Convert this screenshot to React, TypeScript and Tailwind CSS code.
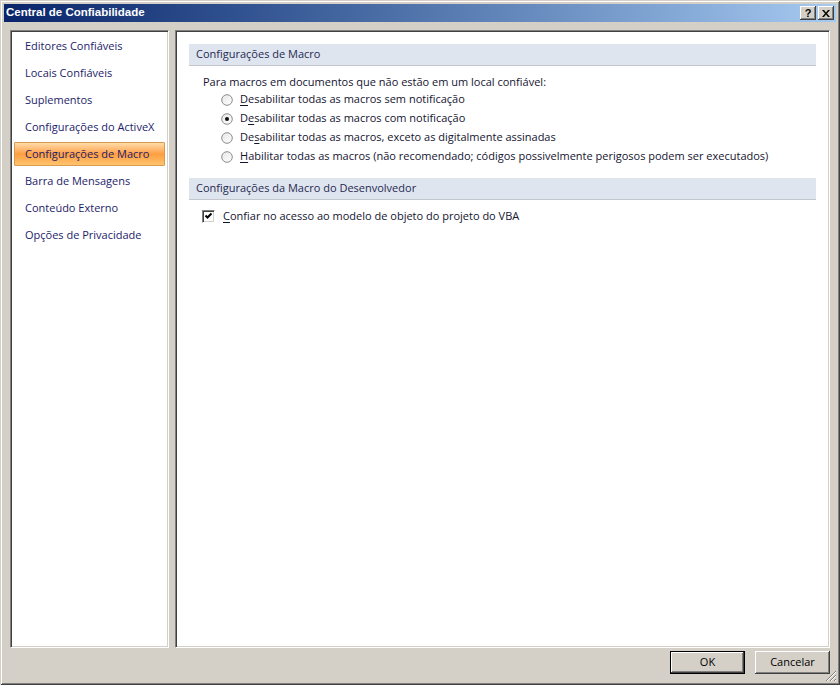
import React from "react";

const navItems = [
  "Editores Confiáveis",
  "Locais Confiáveis",
  "Suplementos",
  "Configurações do ActiveX",
  "Configurações de Macro",
  "Barra de Mensagens",
  "Conteúdo Externo",
  "Opções de Privacidade",
];

function Radio({ checked }: { checked?: boolean }) {
  return (
    <svg width="12" height="12" viewBox="0 0 12 12" className="shrink-0">
      <defs>
        <linearGradient id="rg" x1="0" y1="0" x2="1" y2="1">
          <stop offset="0" stopColor="#e6e6e6" />
          <stop offset="1" stopColor="#ffffff" />
        </linearGradient>
      </defs>
      <circle cx="6" cy="6" r="5.3" fill="url(#rg)" stroke="#8c8c8c" strokeWidth="1" />
      {checked && <circle cx="6" cy="6" r="2" fill="#111" />}
    </svg>
  );
}

function RadioRow({
  checked,
  before,
  u,
  after,
}: {
  checked?: boolean;
  before: string;
  u: string;
  after: string;
}) {
  return (
    <div className="flex h-[19px] items-center pl-[32px]">
      <Radio checked={checked} />
      <span className="ml-[7px] whitespace-nowrap">
        {before}
        <span className="underline underline-offset-2">{u}</span>
        {after}
      </span>
    </div>
  );
}

function SectionHeader({ children }: { children: React.ReactNode }) {
  return (
    <div className="flex h-[22px] items-center border-b border-[#c3c7cc] bg-[#dfe5ee] pl-[7px] text-[#1f2a52]">
      {children}
    </div>
  );
}

export default function App() {
  const raised =
    "shadow-[inset_-1px_-1px_0_#404040,inset_1px_1px_0_#ffffff,inset_-2px_-2px_0_#808080]";
  const sunken =
    "border border-t-[#808080] border-l-[#808080] border-b-white border-r-white shadow-[inset_1px_1px_0_#404040,inset_-1px_-1px_0_#d4d0c8]";
  return (
    <div
      className="relative flex h-[685px] w-[840px] flex-col overflow-hidden bg-[#d4d0c8] p-[4px] text-[11px] shadow-[inset_1px_1px_0_#d4d0c8,inset_-1px_-1px_0_#404040,inset_2px_2px_0_#ffffff,inset_-2px_-2px_0_#808080]"
      style={{ fontFamily: '"Open Sans", "Noto Sans", sans-serif' }}
    >
      {/* title bar */}
      <div className="flex h-[18px] shrink-0 items-center justify-between bg-gradient-to-r from-[#0a246a] to-[#a6caf0] pl-[2px] pr-[2px]">
        <span
          className="text-[11.5px] font-bold text-white"
          style={{ fontFamily: '"Liberation Sans", Arial, sans-serif' }}
        >
          Central de Confiabilidade
        </span>
        <div className="flex gap-[2px]">
          <div
            className={`flex h-[14px] w-[16px] items-center justify-center bg-[#d4d0c8] ${raised}`}
          >
            <span
              className="text-[11px] font-bold leading-none text-black"
              style={{ fontFamily: '"Liberation Sans", Arial, sans-serif' }}
            >
              ?
            </span>
          </div>
          <div
            className={`flex h-[14px] w-[16px] items-center justify-center bg-[#d4d0c8] ${raised}`}
          >
            <svg width="8" height="7" viewBox="0 0 8 7">
              <path d="M0 0h2l2 2.5L6 0h2L5 3.5 8 7H6L4 4.5 2 7H0l3-3.5z" fill="#000" />
            </svg>
          </div>
        </div>
      </div>

      {/* content */}
      <div className="flex min-h-0 flex-1 gap-[6px] px-[6px] pt-[8px]">
        {/* left nav */}
        <div className={`w-[159px] shrink-0 bg-white p-[2px] pt-[3px] ${sunken}`}>
          <div className="flex flex-col gap-[3px] px-[1px]">
            {navItems.map((item, i) =>
              i === 4 ? (
                <div
                  key={item}
                  className="flex h-[24px] items-center rounded-[1px] border border-[#d99a50] bg-gradient-to-b from-[#ffdca8] via-[#ff9e40] to-[#ffc46e] pl-[10px] text-[#1c1c6a]"
                >
                  {item}
                </div>
              ) : (
                <div
                  key={item}
                  className="flex h-[24px] items-center border border-transparent pl-[10px] text-[#1c1c6a]"
                >
                  {item}
                </div>
              )
            )}
          </div>
        </div>

        {/* right panel */}
        <div className={`min-w-0 flex-1 bg-white px-[13px] pt-[13px] text-[#141430] ${sunken}`}>
          <SectionHeader>Configurações de Macro</SectionHeader>
          <div className="mt-[8px] flex h-[16px] items-center pl-[14px]">
            Para macros em documentos que não estão em um local confiável:
          </div>
          <RadioRow before="" u="D" after="esabilitar todas as macros sem notificação" />
          <RadioRow checked before="D" u="e" after="sabilitar todas as macros com notificação" />
          <RadioRow before="De" u="s" after="abilitar todas as macros, exceto as digitalmente assinadas" />
          <RadioRow
            before=""
            u="H"
            after="abilitar todas as macros (não recomendado; códigos possivelmente perigosos podem ser executados)"
          />
          <div className="mt-[12px]">
            <SectionHeader>Configurações da Macro do Desenvolvedor</SectionHeader>
          </div>
          <div className="mt-[8px] flex h-[16px] items-center pl-[13px]">
            <div className="flex h-[13px] w-[13px] shrink-0 items-center justify-center border border-t-[#808080] border-l-[#808080] border-b-white border-r-white bg-white shadow-[inset_1px_1px_0_#404040,inset_-1px_-1px_0_#d4d0c8]">
              <svg width="9" height="9" viewBox="0 0 9 9">
                <path d="M1.5 3.5L3.5 5.5L7.5 1.5" stroke="#000" strokeWidth="2" fill="none" />
              </svg>
            </div>
            <span className="ml-[8px] whitespace-nowrap">
              <span className="underline underline-offset-2">C</span>
              onfiar no acesso ao modelo de objeto do projeto do VBA
            </span>
          </div>
        </div>
      </div>

      {/* buttons */}
      <div className="flex h-[33px] shrink-0 items-start justify-end gap-[10px] pr-[6px] pt-[3px]">
        <button
          className={`flex h-[23px] w-[75px] items-center justify-center bg-[#d4d0c8] text-black shadow-[inset_0_0_0_1px_#000,inset_-2px_-2px_0_#404040,inset_2px_2px_0_#ffffff,inset_-3px_-3px_0_#808080]`}
        >
          OK
        </button>
        <button
          className={`flex h-[23px] w-[75px] items-center justify-center bg-[#d4d0c8] text-black ${raised}`}
        >
          Cancelar
        </button>
      </div>

      {/* resize grip */}
      <svg
        width="12"
        height="12"
        viewBox="0 0 12 12"
        className="absolute bottom-[3px] right-[3px]"
      >
        <path d="M11 1L1 11M11 5L5 11M11 9L9 11" stroke="#808080" strokeWidth="1" />
        <path d="M11 2L2 11M11 6L6 11M11 10L10 11" stroke="#ffffff" strokeWidth="1" />
      </svg>
    </div>
  );
}
